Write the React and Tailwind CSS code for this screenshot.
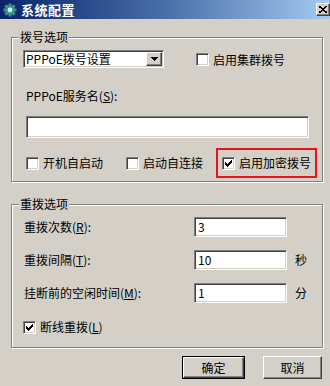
import React from 'react';

// classic win 3d edges
const SUNKEN =
  'border border-t-[#808080] border-l-[#808080] border-b-white border-r-white shadow-[inset_1px_1px_0_#404040,inset_-1px_-1px_0_#d4d0c8]';
const RAISED =
  'border border-t-white border-l-white border-b-[#404040] border-r-[#404040] shadow-[inset_-1px_-1px_0_#808080]';

const CheckMark = () => (
  <svg width="9" height="9" viewBox="0 0 9 9" shapeRendering="crispEdges">
    <path
      d="M1 3h1v3h-1z M2 4h1v3h-1z M3 5h1v3h-1z M4 4h1v3h-1z M5 3h1v3h-1z M6 2h1v3h-1z M7 1h1v3h-1z"
      fill="#000"
    />
  </svg>
);

const Checkbox = ({ checked }) => (
  <div className={`w-[13px] h-[13px] shrink-0 bg-white box-border flex items-center justify-center ${SUNKEN}`}>
    {checked && <CheckMark />}
  </div>
);

const CheckItem = ({ checked, label, className = '' }) => (
  <div className={`flex items-center ${className}`}>
    <Checkbox checked={checked} />
    <span className="ml-[4px] leading-[14px] whitespace-nowrap">{label}</span>
  </div>
);

const Group = ({ title, className = '', children }) => (
  <div
    className={`relative ml-[11px] w-[312px] box-border border border-[#808080] shadow-[inset_1px_1px_0_#fff,1px_1px_0_#fff] ${className}`}
  >
    <span className="absolute left-[7px] -top-[8px] px-[1px] bg-[#d4d0c8] leading-[14px] whitespace-nowrap">
      {title}
    </span>
    {children}
  </div>
);

const Gear = () => (
  <svg width="14" height="14" viewBox="0 0 14 14">
    <g fill="#3f8f8a">
      <rect x="5.5" y="0.5" width="3" height="13" />
      <rect x="0.5" y="5.5" width="13" height="3" />
      <rect x="5.5" y="0.5" width="3" height="13" transform="rotate(45 7 7)" />
      <rect x="5.5" y="0.5" width="3" height="13" transform="rotate(-45 7 7)" />
      <circle cx="7" cy="7" r="4.6" />
    </g>
    <circle cx="7" cy="7" r="2.4" fill="#d8eeea" />
  </svg>
);

const UnitRow = ({ label, value, unit, className = '' }) => (
  <div className={`flex items-center h-[20px] pl-[12px] ${className}`}>
    <span className="w-[170px] leading-[14px] whitespace-nowrap">{label}</span>
    <div className={`w-[93px] h-[20px] box-border bg-white flex items-center pl-[3px] ${SUNKEN}`}>
      <span className="leading-[14px]">{value}</span>
    </div>
    {unit && <span className="ml-[8px] leading-[14px]">{unit}</span>}
  </div>
);

export default function App() {
  return (
    <div
      className="w-[330px] h-[386px] overflow-hidden bg-[#d4d0c8] text-[12px] text-black"
      style={{ fontFamily: '"Noto Sans CJK SC", "Noto Sans", sans-serif' }}
    >
      {/* title bar */}
      <div className="h-[19px] flex items-center bg-gradient-to-r from-[#0a246a] via-[#4a6fa8] to-[#a6caf0]">
        <div className="ml-[3px]">
          <Gear />
        </div>
        <span className="ml-[4px] text-white font-bold text-[13px] tracking-[0.5px] leading-[14px]">系统配置</span>
        <div className={`ml-auto w-[14px] h-[13px] box-border bg-[#d4d0c8] flex items-center justify-center ${RAISED}`}>
          <svg width="8" height="7" viewBox="0 0 8 7" shapeRendering="crispEdges">
            <path d="M0 0L8 7M8 0L0 7" stroke="#000" strokeWidth="1.6" />
          </svg>
        </div>
      </div>

      {/* 拨号选项 */}
      <Group title="拨号选项" className="mt-[18px] h-[145px]">
        <div className="flex items-center h-[18px] mt-[12px] pl-[11px]">
          <div className={`w-[141px] h-[18px] box-border bg-white flex items-center ${SUNKEN}`}>
            <span className="pl-[2px] leading-[14px] whitespace-nowrap flex-1">PPPoE拨号设置</span>
            <div className={`w-[16px] h-[14px] box-border bg-[#d4d0c8] flex items-center justify-center mr-[1px] ${RAISED}`}>
              <svg width="7" height="4" viewBox="0 0 7 4" shapeRendering="crispEdges">
                <path d="M0 0h7L3.5 4z" fill="#000" />
              </svg>
            </div>
          </div>
          <CheckItem label="启用集群拨号" className="ml-[32px] mt-[1px]" />
        </div>

        <div className="mt-[22px] pl-[14px] leading-[12px] whitespace-nowrap">
          PPPoE服务名(<u>S</u>):
        </div>

        <div className={`mt-[14px] ml-[14px] w-[283px] h-[22px] box-border bg-white ${SUNKEN}`} />

        <div className="flex items-center h-[30px] mt-[10px] pl-[14px]">
          <CheckItem label="开机自启动" className="w-[100px]" />
          <CheckItem label="启动自连接" className="w-[90px]" />
          <div className="h-[30px] w-[101px] box-border border-2 border-[#e8141b] flex items-center pl-[4px]">
            <CheckItem checked label="启用加密拨号" />
          </div>
        </div>
      </Group>

      {/* 重拨选项 */}
      <Group title="重拨选项" className="mt-[22px] h-[144px]">
        <UnitRow label={<>重拨次数(<u>R</u>):</>} value="3" className="mt-[12px]" />
        <UnitRow label={<>重拨间隔(<u>T</u>):</>} value="10" unit="秒" className="mt-[13px]" />
        <UnitRow label={<>挂断前的空闲时间(<u>M</u>):</>} value="1" unit="分" className="mt-[13px]" />
        <CheckItem checked label={<>断线重拨(<u>L</u>)</>} className="mt-[17px] pl-[11px]" />
      </Group>

      {/* buttons */}
      <div className="flex justify-end items-center mt-[8px] pr-[8px]">
        <div className="border border-black">
          <div className={`w-[61px] h-[21px] box-border bg-[#d4d0c8] flex items-center justify-center ${RAISED}`}>
            <span className="leading-[14px]">确定</span>
          </div>
        </div>
        <div className={`ml-[18px] w-[59px] h-[23px] box-border bg-[#d4d0c8] flex items-center justify-center ${RAISED}`}>
          <span className="leading-[14px]">取消</span>
        </div>
      </div>
    </div>
  );
}
